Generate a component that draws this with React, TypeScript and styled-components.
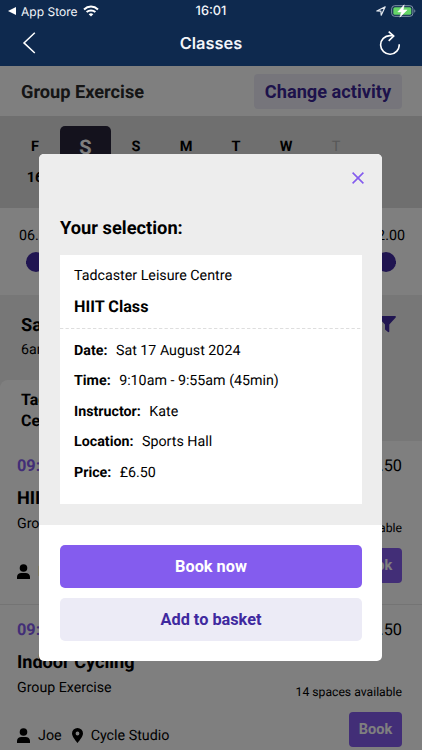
import React from "react";
import styled, { createGlobalStyle } from "styled-components";

const GlobalStyle = createGlobalStyle`
  *, *::before, *::after { box-sizing: border-box; }
  html, body { margin: 0; height: 100%; overflow: hidden; }
  body { font-family: Roboto, "Liberation Sans", sans-serif; color: #000; background: #fff; text-rendering: geometricPrecision; }
  button { font-family: inherit; border: 0; padding: 0; }
`;

const Screen = styled.div`
  width: 422px;
  height: 750px;
  display: flex;
  flex-direction: column;
  overflow: hidden;
`;

const Header = styled.header`
  flex: none;
  height: 66px;
  background: #0e294e;
  color: #f3f5f9;
  font-family: Inter, sans-serif;
`;

const StatusBar = styled.div`
  display: grid;
  grid-template-columns: 1fr auto 1fr;
  align-items: center;
  height: 22px;
  padding: 0 6px 0 8px;
  font-size: 12px;
`;

const StatusGroup = styled.div<{ $end?: boolean }>`
  display: flex;
  align-items: center;
  justify-content: ${(p) => (p.$end ? "flex-end" : "flex-start")};
  gap: 5px;
  letter-spacing: 0.02px;
`;

const Clock = styled.div`
  font-size: 12.8px;
  font-weight: 500;
  padding-right: 2px;
`;

const NavBar = styled.div`
  display: grid;
  grid-template-columns: 1fr auto 1fr;
  align-items: center;
  height: 42px;
  padding: 0 22px;
`;

const NavTitle = styled.h1`
  margin: 0;
  font-size: 16.4px;
  font-weight: 600;
`;

const NavAction = styled.div<{ $end?: boolean }>`
  display: flex;
  justify-content: ${(p) => (p.$end ? "flex-end" : "flex-start")};
`;

const Page = styled.main`
  position: relative;
  flex: 1;
  min-height: 0;
  overflow: hidden;
`;

const ActivityBar = styled.section`
  display: flex;
  align-items: center;
  justify-content: space-between;
  height: 50px;
  padding: 1px 20px 0 21px;
`;

const ActivityName = styled.h2`
  margin: 0;
  padding-top: 1px;
  font-size: 18.2px;
  font-weight: 700;
  color: #2a2a2a;
`;

const ChangeButton = styled.button`
  width: 148px;
  height: 35px;
  border-radius: 4px;
  background: #ecebf6;
  color: #3b2596;
  font-size: 18.2px;
  font-weight: 700;
`;

const DayStrip = styled.section`
  display: flex;
  height: 92px;
  padding: 10px 11px 0 10px;
  background: #dedede;
`;

const Day = styled.div<{ $selected?: boolean; $muted?: boolean }>`
  display: flex;
  flex-direction: column;
  align-items: center;
  gap: ${(p) => (p.$selected ? 10 : 13)}px;
  flex: none;
  width: ${(p) => (p.$selected ? 51 : 50)}px;
  height: ${(p) => (p.$selected ? 72 : 74)}px;
  padding-top: ${(p) => (p.$selected ? 9 : 12)}px;
  border-radius: 5px;
  background: ${(p) => (p.$selected ? "#28243a" : "transparent")};
  color: ${(p) => (p.$selected ? "#fff" : p.$muted ? "#b0b0b0" : "#000")};
  font-size: ${(p) => (p.$selected ? 20 : 14.5)}px;
  font-weight: ${(p) => (p.$muted ? 400 : 700)};
  line-height: ${(p) => (p.$selected ? 24 : 18)}px;
`;

const TimeRange = styled.section`
  height: 87px;
  padding: 17px 17px 0 19px;
`;

const TimeLabels = styled.div`
  display: flex;
  justify-content: space-between;
  font-size: 14.3px;
  line-height: 22px;
`;

const Track = styled.div`
  display: flex;
  align-items: center;
  justify-content: space-between;
  margin: 5px 9px 0 7px;
  height: 20px;
  background: linear-gradient(#3b2596, #3b2596) center / 100% 3px no-repeat;
`;

const Knob = styled.span`
  width: 20px;
  height: 20px;
  border-radius: 50%;
  background: #412ba3;
`;

const ResultsHead = styled.section`
  height: 146px;
  background: #eee;
`;

const ResultsTitle = styled.div`
  display: flex;
  justify-content: space-between;
  height: 85px;
  padding: 20px 26px 0 21px;
`;

const DateHeading = styled.h2`
  margin: 0;
  font-size: 18.2px;
  line-height: 22px;
`;

const DateSub = styled.p`
  margin: 3px 0 0;
  font-size: 14.2px;
  line-height: 20px;
`;

const FilterIcon = styled.svg`
  margin-top: 1px;
`;

const CentreTab = styled.div`
  width: 180px;
  height: 61px;
  padding: 10px 21px;
  border-radius: 8px 8px 0 0;
  background: #fff;
  font-size: 16px;
  font-weight: 700;
  line-height: 20.5px;
`;

const ClassItem = styled.article`
  height: 164px;
  padding: 13px 20px 0 17px;
  border-bottom: 1px solid #e8e8e8;
`;

const ItemRow = styled.div<{ $h: number }>`
  display: flex;
  align-items: center;
  justify-content: space-between;
  height: ${(p) => p.$h}px;
`;

const ItemTime = styled.span`
  color: #845cee;
  font-size: 16.3px;
  font-weight: 700;
`;

const ItemPrice = styled.span`
  font-size: 16.3px;
`;

const ItemName = styled.h3`
  margin: 0;
  font-size: 18.1px;
  font-weight: 700;
`;

const ItemKind = styled.span`
  padding-top: 1px;
  font-size: 14.2px;
`;

const Spaces = styled.span`
  font-size: 12.2px;
  padding-top: 9px;
`;

const ItemMeta = styled.div`
  display: flex;
  align-items: center;
  gap: 8px;
  padding-top: 12px;
  font-size: 14.3px;
`;

const PinIcon = styled.svg`
  margin: 0 0 0 2px;
`;

const BookButton = styled.button`
  width: 53px;
  height: 35px;
  padding-bottom: 1px;
  border-radius: 4px;
  background: #845cee;
  color: #fff;
  font-size: 14.5px;
  font-weight: 700;
`;

const Scrim = styled.div`
  position: absolute;
  inset: 0;
  display: flex;
  justify-content: center;
  align-items: flex-start;
  padding: 88px 1px 0 0;
  background: rgba(0, 0, 0, 0.5);
`;

const Dialog = styled.div`
  width: 343px;
  height: 507px;
  border-radius: 5px;
  overflow: hidden;
  background: #fff;
`;

const DialogBody = styled.div`
  height: 371px;
  padding: 18px 20px 0 21px;
  background: #ededed;
`;

const CloseRow = styled.div`
  display: flex;
  justify-content: flex-end;
  height: 44px;
  margin-right: -2px;
`;

const DialogTitle = styled.h2`
  margin: 0;
  height: 39px;
  font-size: 18.3px;
  font-weight: 700;
  line-height: 25px;
`;

const SelectionCard = styled.div`
  height: 249px;
  background: #fff;
`;

const CardHead = styled.div`
  height: 73px;
  padding: 11px 14px 0;
`;

const Centre = styled.div`
  font-size: 14.25px;
  line-height: 20px;
`;

const ClassName = styled.div`
  margin-top: 10px;
  font-size: 16.2px;
  font-weight: 700;
  line-height: 22px;
`;

const DashedLine = styled.svg`
  display: block;
`;

const Details = styled.dl`
  margin: 0;
  padding: 6.6px 14px 0;
`;

const Detail = styled.div`
  display: flex;
  align-items: center;
  gap: 8.5px;
  height: 30.5px;
  font-size: 14.25px;
  dt { font-weight: 700; }
  dd { margin: 0; }
`;

const DialogActions = styled.div`
  display: flex;
  flex-direction: column;
  gap: 10.5px;
  padding: 20px 20px 0 21px;
`;

const ActionButton = styled.button<{ $primary?: boolean }>`
  height: 42.5px;
  border-radius: 5px;
  background: ${(p) => (p.$primary ? "#845cee" : "#ecebf6")};
  color: ${(p) => (p.$primary ? "#fff" : "#3f299f")};
  font-size: 16.3px;
  font-weight: 700;
`;

const days = [
  { d: "F", n: "16" },
  { d: "S", n: "17", selected: true },
  { d: "S", n: "18" },
  { d: "M", n: "19" },
  { d: "T", n: "20" },
  { d: "W", n: "21" },
  { d: "T", n: "22", muted: true },
];

const classes = [
  { time: "09:10", price: "£6.50", name: "HIIT Class", who: "Kate", where: "Sports Hall", spaces: "9 spaces available" },
  { time: "09:15", price: "£6.50", name: "Indoor Cycling", who: "Joe", where: "Cycle Studio", spaces: "14 spaces available" },
];

const details = [
  ["Date:", "Sat 17 August 2024"],
  ["Time:", "9:10am - 9:55am (45min)"],
  ["Instructor:", "Kate"],
  ["Location:", "Sports Hall"],
  ["Price:", "£6.50"],
];

const Wifi = () => (
  <svg width="16" height="12" viewBox="0 0 16 12" fill="none" stroke="#fff" strokeWidth="2">
    <path d="M1 4.4C5 .6 11 .6 15 4.4" />
    <path d="M3.6 7.1c2.5-2.3 6.3-2.3 8.8 0" />
    <path d="M8 11.5 5.7 9.2c1.3-1.2 3.3-1.2 4.6 0z" fill="#fff" stroke="none" />
  </svg>
);

const Battery = () => (
  <svg width="25" height="14" viewBox="0 0 25 14">
    <rect x="0.7" y="1.7" width="21.2" height="10.6" rx="3" fill="none" stroke="#8295aa" />
    <rect x="2.3" y="3.2" width="18" height="7.6" rx="1.6" fill="#65d568" />
    <path d="M23.3 5.2v3.600c1.400-.7 1.400-2.900 0-3.600z" fill="#8295aa" />
    <path d="M13.200.8 6.800 7.900h3.600L8.900 13.200l7.200-7.300H12.200z" fill="#fff" stroke="#fff" strokeWidth=".5" />
  </svg>
);

const Person = () => (
  <svg width="13" height="15" viewBox="0 0 13 15">
    <circle cx="6.5" cy="4" r="3.8" />
    <path d="M0 15v-2.200C0 10.300 2 8.900 4.200 8.900h4.600C11 8.900 13 10.300 13 12.800V15z" />
  </svg>
);

const Pin = () => (
  <PinIcon width="11" height="15" viewBox="0 0 11 15">
    <path fillRule="evenodd" d="M5.500 15C4.800 13.800 0 9 0 5.500a5.500 5.500 0 0 1 11 0C11 9 6.200 13.800 5.500 15zM5.500 3.600a1.900 1.900 0 1 0 0 3.800 1.900 1.900 0 0 0 0-3.800z" />
  </PinIcon>
);

export default function App() {
  return (
    <Screen>
      <GlobalStyle />
      <Header>
        <StatusBar>
          <StatusGroup>
            <svg width="8" height="8" viewBox="0 0 8 8"><path d="M0 4 8 0v8z" fill="#fff" /></svg>
            <span>App Store</span>
            <Wifi />
          </StatusGroup>
          <Clock>16:01</Clock>
          <StatusGroup $end>
            <svg width="10" height="10" viewBox="0 0 10 10" fill="none" stroke="#e2e7ee" strokeWidth="1.200" strokeLinejoin="round">
              <path d="M.8 5 9.200.8 5.200 9.200 4.900 5.200z" />
            </svg>
            <Battery />
          </StatusGroup>
        </StatusBar>
        <NavBar>
          <NavAction>
            <svg width="14" height="22" viewBox="0 0 14 22" fill="none" stroke="#fff" strokeWidth="1.500">
              <path d="M12.800.8 2 10.900 12.800 21" />
            </svg>
          </NavAction>
          <NavTitle>Classes</NavTitle>
          <NavAction $end>
            <svg width="22" height="25" viewBox="0 0 22 25" fill="none" stroke="#fff" strokeWidth="1.600">
              <path d="M21.200 13.300A9.300 9.300 0 1 1 11.900 4.600H15.300" />
              <path d="M10.700.600l5 4.500-5 4.700" />
            </svg>
          </NavAction>
        </NavBar>
      </Header>
      <Page>
        <ActivityBar>
          <ActivityName>Group Exercise</ActivityName>
          <ChangeButton>Change activity</ChangeButton>
        </ActivityBar>
        <DayStrip>
          {days.map((x) => (
            <Day key={x.n} $selected={x.selected} $muted={x.muted}>
              <span>{x.d}</span>
              <span>{x.n}</span>
            </Day>
          ))}
        </DayStrip>
        <TimeRange>
          <TimeLabels><span>06.00</span><span>22.00</span></TimeLabels>
          <Track><Knob /><Knob /></Track>
        </TimeRange>
        <ResultsHead>
          <ResultsTitle>
            <div>
              <DateHeading>Sat 17 August</DateHeading>
              <DateSub>6am - 10pm</DateSub>
            </div>
            <FilterIcon width="18" height="17" viewBox="0 0 18 17">
              <path d="M.8 0h16.400q1 .4.500 1.400L11.300 8.500V15.500q-.4 1-1.300.5L7 13.500V8.500L.3 1.400Q-.1.300.8 0z" fill="#412ba3" />
            </FilterIcon>
          </ResultsTitle>
          <CentreTab>Tadcaster Leisure Centre</CentreTab>
        </ResultsHead>
        {classes.map((c) => (
          <ClassItem key={c.name}>
            <ItemRow $h={23}><ItemTime>{c.time}</ItemTime><ItemPrice>{c.price}</ItemPrice></ItemRow>
            <ItemRow $h={42}><ItemName>{c.name}</ItemName></ItemRow>
            <ItemRow $h={8}><ItemKind>Group Exercise</ItemKind><Spaces>{c.spaces}</Spaces></ItemRow>
            <ItemRow $h={77}>
              <ItemMeta><Person /><span>{c.who}</span><Pin /><span>{c.where}</span></ItemMeta>
              <BookButton>Book</BookButton>
            </ItemRow>
          </ClassItem>
        ))}
        <Scrim>
          <Dialog role="dialog">
            <DialogBody>
              <CloseRow>
                <svg width="12" height="12" viewBox="0 0 12 12" stroke="#845cee" strokeWidth="1.600">
                  <path d="M.6.600l10.800 10.800M11.400.600.6 11.400" />
                </svg>
              </CloseRow>
              <DialogTitle>Your selection:</DialogTitle>
              <SelectionCard>
                <CardHead>
                  <Centre>Tadcaster Leisure Centre</Centre>
                  <ClassName>HIIT Class</ClassName>
                </CardHead>
                <DashedLine width="302" height="1">
                  <path d="M0 .5H302" stroke="#dedede" strokeDasharray="3.300 2.200" />
                </DashedLine>
                <Details>
                  {details.map(([k, v]) => (
                    <Detail key={k}><dt>{k}</dt><dd>{v}</dd></Detail>
                  ))}
                </Details>
              </SelectionCard>
            </DialogBody>
            <DialogActions>
              <ActionButton $primary>Book now</ActionButton>
              <ActionButton>Add to basket</ActionButton>
            </DialogActions>
          </Dialog>
        </Scrim>
      </Page>
    </Screen>
  );
}
